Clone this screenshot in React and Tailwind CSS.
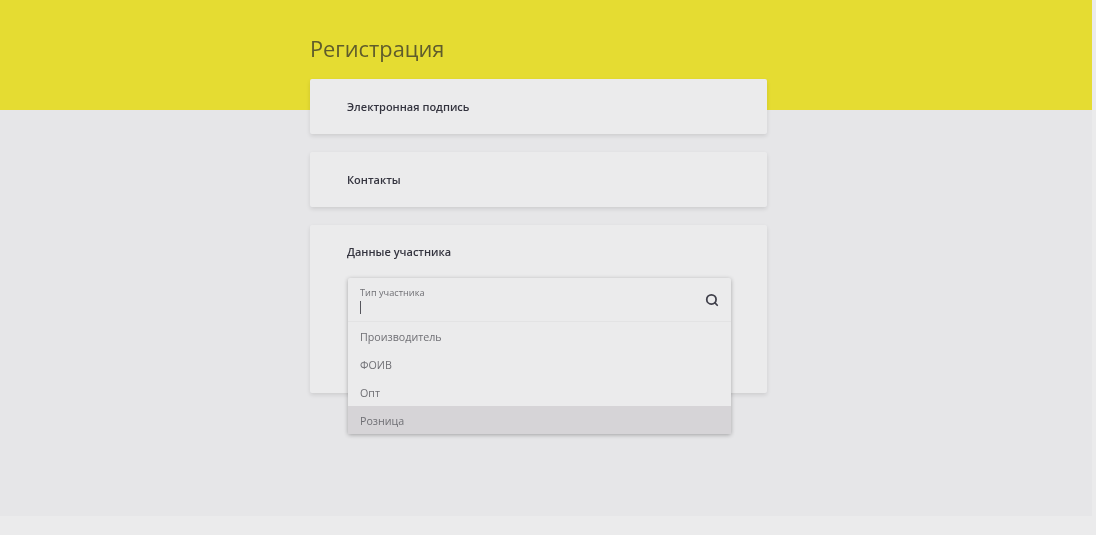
import React from 'react';
import { Search } from 'lucide-react';

const options = ['Производитель', 'ФОИВ', 'Опт', 'Розница'];

function Card({ title, children, className }) {
  return (
    <section className={`bg-[#ebebec] rounded-[2px] shadow-[0_2px_4px_rgba(0,0,0,0.11)] px-[37px] ${className}`}>
      <h2 className="text-[11px] leading-[16px] font-semibold text-[#34343f]">{title}</h2>
      {children}
    </section>
  );
}

export default function App() {
  return (
    <div className="w-[1096px] h-[535px] overflow-hidden bg-[#ebebec] font-['Open_Sans',sans-serif] blur-[0.4px]">
      <div className="w-[1092px] h-[516px] bg-[#e6e6e8]">
        <header className="h-[110px] bg-[#e5dc32] pl-[310px] pt-[35px]">
          <h1 className="text-[21.8px] leading-[28px] text-[#5f5c2c]">Регистрация</h1>
        </header>
        <main className="w-[457px] ml-[310px] -mt-[31px] flex flex-col gap-[18px]">
          <Card title="Электронная подпись" className="h-[55px] pt-[20px]" />
          <Card title="Контакты" className="h-[55px] pt-[20px]" />
          <Card title="Данные участника" className="h-[168px] pt-[19px] relative">
            <div className="absolute left-[38px] top-[53px] w-[383px] bg-[#ebebec] rounded-[2px] shadow-[0_1px_4px_rgba(0,0,0,0.3)]">
              <div className="h-[44px] border-b border-[#e3e3e4] pl-[12px] pr-[12px] pt-[9px] flex justify-between">
                <div>
                  <div className="text-[9.2px] leading-[12px] text-[#6f6f74]">Тип участника</div>
                  <div className="w-px h-[13px] mt-[2px] bg-[#55555c]" />
                </div>
                <Search size={14} strokeWidth={3} className="text-[#3f3f4a] mt-[6px]" />
              </div>
              {options.map((option) => (
                <div
                  key={option}
                  className={`h-[28px] pl-[12px] pt-[2px] flex items-center text-[10.7px] text-[#6f6f74] ${option === 'Розница' ? 'bg-[#d6d4d7]' : ''}`}
                >
                  {option}
                </div>
              ))}
            </div>
          </Card>
        </main>
      </div>
    </div>
  );
}
